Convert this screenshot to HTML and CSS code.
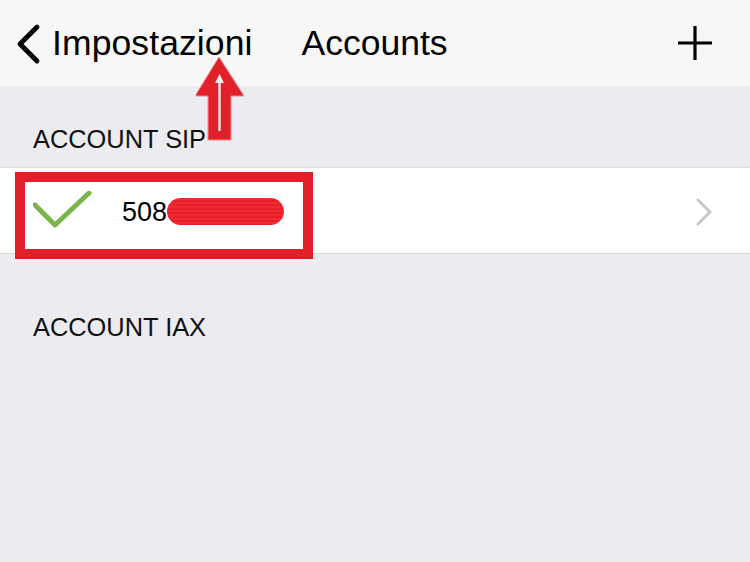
FILE: index.html
```html
<!DOCTYPE html>
<html>
<head>
<meta charset="utf-8">
<link rel="stylesheet" href="styles.css">
</head>
<body>
<div class="screen">
  <header class="nav">
    <div class="back">
      <svg class="back-icon" width="30" height="42" viewBox="0 0 30 42">
        <path d="M24 4 L7 21 L24 38" fill="none" stroke="#000" stroke-width="4.8" stroke-linecap="round" stroke-linejoin="round"/>
      </svg>
      <span class="back-label">Impostazioni</span>
    </div>
    <div class="title">Accounts</div>
    <svg class="plus" width="38" height="38" viewBox="0 0 38 38">
      <path d="M19 2 V36 M2 19 H36" stroke="#000" stroke-width="3.2"/>
    </svg>
  </header>

  <div class="section-header">ACCOUNT SIP</div>
  <div class="row">
    <svg class="check" width="60" height="40" viewBox="0 0 60 40">
      <path d="M2 14 L22 34 L56 2" fill="none" stroke="#7bb54a" stroke-width="5" stroke-linecap="round" stroke-linejoin="round"/>
    </svg>
    <span class="account">508</span><span class="scribble"></span>
    <svg class="chevron" width="20" height="30" viewBox="0 0 20 30">
      <path d="M4 3 L16 15 L4 27" fill="none" stroke="#c7c7cc" stroke-width="3" stroke-linecap="round" stroke-linejoin="round"/>
    </svg>
  </div>
  <div class="section-header second">ACCOUNT IAX</div>

  <div class="highlight-box"></div>
  <svg class="arrow" width="60" height="92" viewBox="0 0 60 92">
    <polygon points="23,2 48,41 35,41 35,85 12,85 12,41 -1,41" fill="#e2202a" stroke="#f08a8f" stroke-width="1"/>
    <line x1="23.5" y1="26" x2="23.5" y2="76" stroke="#fbe8e8" stroke-width="2.4"/>
    <polygon points="23.5,19 28,28 19,28" fill="#fbe8e8"/>
  </svg>
</div>
</body>
</html>
```
FILE: styles.css
```css
* { box-sizing: border-box; }
html, body { margin: 0; padding: 0; }
body {
  width: 750px;
  height: 562px;
  background: #ebebf0;
  font-family: "Liberation Sans", Arial, sans-serif;
  color: #000;
  overflow: hidden;
}
.screen {
  position: relative;
  width: 750px;
  height: 562px;
}
.nav {
  height: 87px;
  background: #f7f7f7;
  display: flex;
  align-items: center;
  padding: 0 36px 0 13px;
  border-bottom: 1px solid #ededed;
}
.back {
  display: flex;
  align-items: center;
}
.back-icon { display: block; margin-top: 2px; }
.back-label {
  font-size: 35.5px;
  line-height: 36px;
  margin-left: 9px;
  letter-spacing: 0.1px;
}
.title {
  font-size: 35.5px;
  line-height: 36px;
  margin-left: 49px;
  flex: 1;
}
.plus { display: block; }
.section-header {
  height: 80px;
  display: flex;
  align-items: flex-end;
  padding: 0 0 16px 33px;
  font-size: 25.4px;
  line-height: 24px;
  color: #111;
}
.section-header.second {
  height: 100px;
  padding-bottom: 15px;
}
.row {
  height: 87px;
  background: #fff;
  border-top: 1px solid #dcdce1;
  border-bottom: 1px solid #d6d6db;
  display: flex;
  align-items: center;
  padding-left: 33px;
  padding-right: 36px;
}
.check { display: block; margin-top: 0px; }
.account {
  font-size: 27px;
  line-height: 28px;
  margin-left: 29px;
  margin-top: 2px;
}
.scribble {
  display: inline-block;
  width: 117px;
  height: 27px;
  border-radius: 14px;
  background: repeating-linear-gradient(180deg, #ee2a32 0 2px, #e81f28 2px 4px);
  margin-left: 0;
  margin-top: 2px;
}
.chevron {
  display: block;
  margin-left: auto;
  margin-top: 2px;
}
.highlight-box {
  position: absolute;
  left: 15px;
  top: 172px;
  width: 298px;
  height: 87px;
  border: 10px solid #e11f29;
}
.arrow {
  position: absolute;
  left: 196px;
  top: 55px;
}
```
